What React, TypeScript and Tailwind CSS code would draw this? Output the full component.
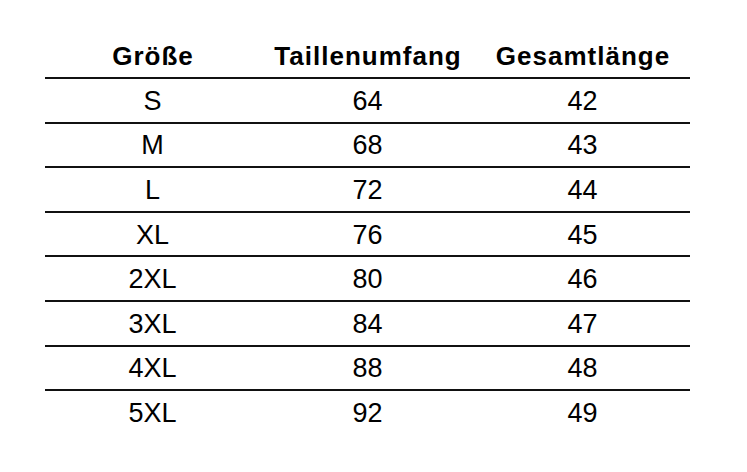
const ROWS: [string, number, number][] = [
  ["S", 64, 42],
  ["M", 68, 43],
  ["L", 72, 44],
  ["XL", 76, 45],
  ["2XL", 80, 46],
  ["3XL", 84, 47],
  ["4XL", 88, 48],
  ["5XL", 92, 49],
];

const HEADERS = ["Größe", "Taillenumfang", "Gesamtlänge"];

export default function App() {
  return (
    <div className="w-[747px] h-[472px] bg-white text-black font-['Liberation_Sans',Arial,sans-serif] pt-[42px] pl-[45px]">
      <div className="w-[645px]">
        <div className="grid grid-cols-3 h-[35px] text-[26px] leading-[28px] font-bold tracking-[1px]">
          {HEADERS.map((h) => (
            <div key={h} className="text-center pl-[1px]">
              {h}
            </div>
          ))}
        </div>
        {ROWS.map(([size, waist, length]) => (
          <div
            key={size}
            className="grid grid-cols-3 h-[44.6px] border-t-2 border-[#111] text-[27px] leading-[30px] items-center pt-[1px]"
          >
            <div className="text-center">{size}</div>
            <div className="text-center">{waist}</div>
            <div className="text-center">{length}</div>
          </div>
        ))}
      </div>
    </div>
  );
}
